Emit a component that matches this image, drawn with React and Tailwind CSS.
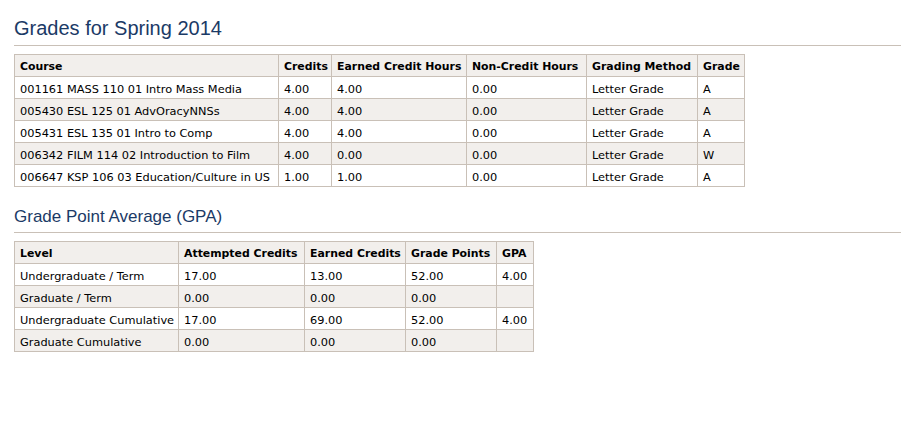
import React from "react";

const courses = [
  ["001161 MASS 110 01 Intro Mass Media", "4.00", "4.00", "0.00", "Letter Grade", "A"],
  ["005430 ESL 125 01 AdvOracyNNSs", "4.00", "4.00", "0.00", "Letter Grade", "A"],
  ["005431 ESL 135 01 Intro to Comp", "4.00", "4.00", "0.00", "Letter Grade", "A"],
  ["006342 FILM 114 02 Introduction to Film", "4.00", "0.00", "0.00", "Letter Grade", "W"],
  ["006647 KSP 106 03 Education/Culture in US", "1.00", "1.00", "0.00", "Letter Grade", "A"],
];
const courseHead = ["Course", "Credits", "Earned Credit Hours", "Non-Credit Hours", "Grading Method", "Grade"];
const courseW = ["w-[264px]", "w-[53px]", "w-[135px]", "w-[120px]", "w-[111px]", "w-[47px]"];

const gpa = [
  ["Undergraduate / Term", "17.00", "13.00", "52.00", "4.00"],
  ["Graduate / Term", "0.00", "0.00", "0.00", ""],
  ["Undergraduate Cumulative", "17.00", "69.00", "52.00", "4.00"],
  ["Graduate Cumulative", "0.00", "0.00", "0.00", ""],
];
const gpaHead = ["Level", "Attempted Credits", "Earned Credits", "Grade Points", "GPA"];
const gpaW = ["w-[164px]", "w-[126px]", "w-[101px]", "w-[91px]", "w-[37px]"];

function Table({ head, rows, widths, tableW }) {
  return (
    <table className={`border-collapse table-fixed text-black ${tableW}`} style={{ fontFamily: '"DejaVu Sans", Verdana, sans-serif' }}>
      <colgroup>
        {widths.map((w, i) => (
          <col key={i} className={w} />
        ))}
      </colgroup>
      <thead>
        <tr className="bg-[#f2efec] h-[22px]">
          {head.map((h, i) => (
            <th key={i} className="border border-[#c9c0b7] px-[5px] pt-[5px] pb-0 align-top text-left text-[10.9px] leading-[14px] font-bold whitespace-nowrap overflow-hidden">
              {h}
            </th>
          ))}
        </tr>
      </thead>
      <tbody>
        {rows.map((r, ri) => (
          <tr key={ri} className={`h-[22px] ${ri % 2 === 1 ? "bg-[#f2efec]" : "bg-white"}`}>
            {r.map((c, ci) => (
              <td key={ci} className="border border-[#c9c0b7] px-[5px] pt-[5px] pb-0 align-top text-[11.35px] leading-[14px] whitespace-nowrap overflow-hidden">
                {c}
              </td>
            ))}
          </tr>
        ))}
      </tbody>
    </table>
  );
}

export default function App() {
  return (
    <div className="w-[901px] h-[423px] bg-white pl-[14px] pt-[16px]">
      <h1 className="text-[20px] leading-[24px] text-[#1b3a66]" style={{ fontFamily: '"Liberation Sans", Arial, sans-serif' }}>
        Grades for Spring 2014
      </h1>
      <div className="mt-[5px] h-px bg-[#c9c0b7]" />
      <div className="mt-[8px]">
        <Table head={courseHead} rows={courses} widths={courseW} tableW="w-[731px]" />
      </div>
      <h2 className="mt-[19px] text-[17px] leading-[22px] text-[#1b3a66]" style={{ fontFamily: '"Liberation Sans", Arial, sans-serif' }}>
        Grade Point Average (GPA)
      </h2>
      <div className="mt-[4px] h-px bg-[#c9c0b7]" />
      <div className="mt-[8px]">
        <Table head={gpaHead} rows={gpa} widths={gpaW} tableW="w-[520px]" />
      </div>
    </div>
  );
}
